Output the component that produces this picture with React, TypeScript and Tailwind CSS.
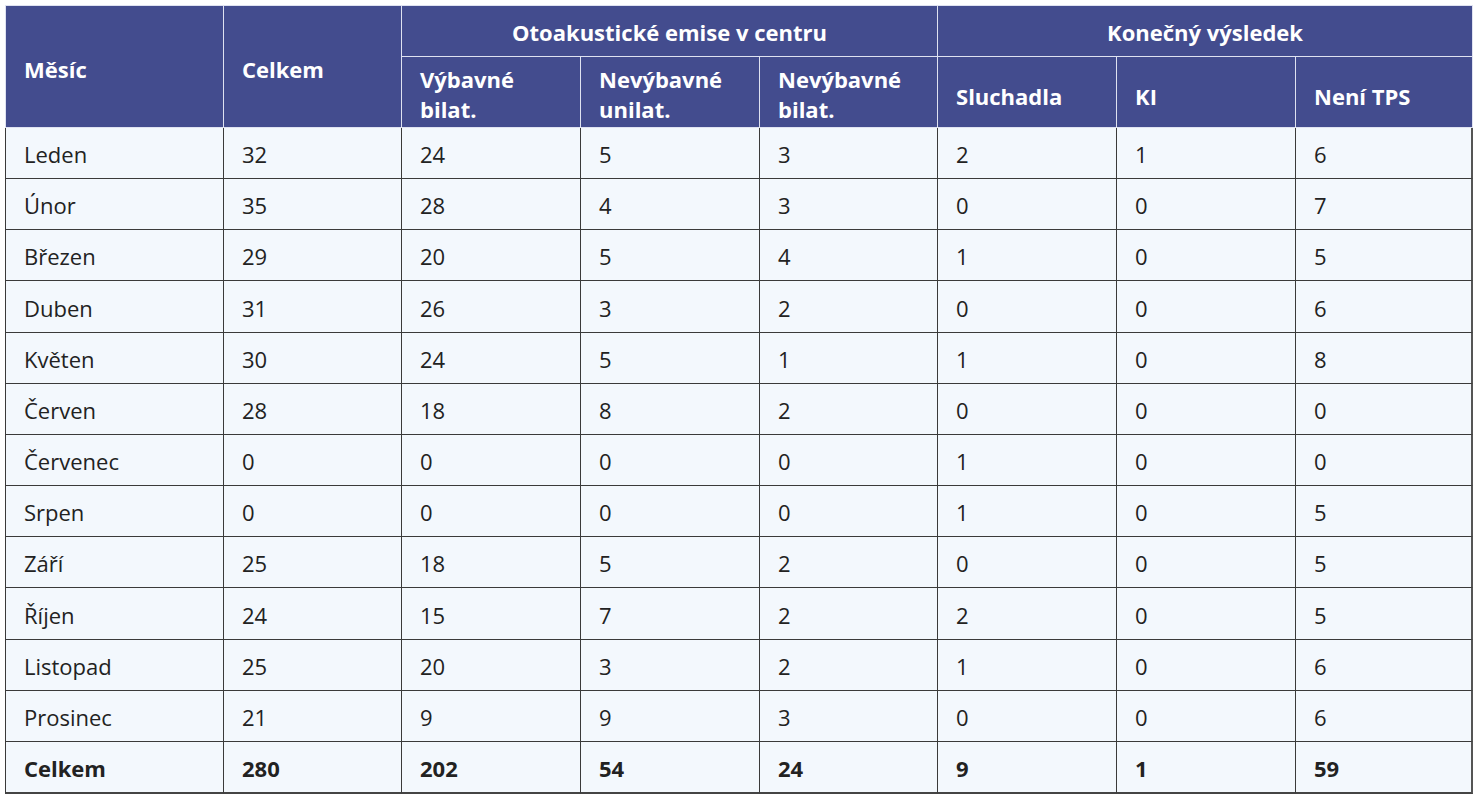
const rows: [string, number, number, number, number, number, number, number][] = [
  ['Leden', 32, 24, 5, 3, 2, 1, 6],
  ['Únor', 35, 28, 4, 3, 0, 0, 7],
  ['Březen', 29, 20, 5, 4, 1, 0, 5],
  ['Duben', 31, 26, 3, 2, 0, 0, 6],
  ['Květen', 30, 24, 5, 1, 1, 0, 8],
  ['Červen', 28, 18, 8, 2, 0, 0, 0],
  ['Červenec', 0, 0, 0, 0, 1, 0, 0],
  ['Srpen', 0, 0, 0, 0, 1, 0, 5],
  ['Září', 25, 18, 5, 2, 0, 0, 5],
  ['Říjen', 24, 15, 7, 2, 2, 0, 5],
  ['Listopad', 25, 20, 3, 2, 1, 0, 6],
  ['Prosinec', 21, 9, 9, 3, 0, 0, 6],
]

const total = ['Celkem', 280, 202, 54, 24, 9, 1, 59]

const widths = [219, 178, 179, 179, 178, 179, 179, 177]

const th = 'border-r border-b border-[#dfe2f1] px-[18px] text-left font-bold align-middle'
const td = 'border-r border-b border-[#3a3a3a] px-[18px] pt-[3px] align-middle'

export default function App() {
  return (
    <div className="bg-white w-[1482px] h-[800px] pt-[5px] pl-[5px]" style={{ fontFamily: '"Open Sans", sans-serif' }}>
      <table className="border-separate border-spacing-0 table-fixed w-[1468px] text-[22px] text-[#222]">
        <colgroup>
          {widths.map((w, i) => (
            <col key={i} style={{ width: w }} />
          ))}
        </colgroup>
        <thead className="bg-[#434c8e] text-white">
          <tr className="h-[52px]">
            <th rowSpan={2} className={th + ' border-l border-t pt-[6px]'}>Měsíc</th>
            <th rowSpan={2} className={th + ' border-t pt-[6px]'}>Celkem</th>
            <th colSpan={3} className="border-r border-b border-t border-[#dfe2f1] text-center font-bold pt-[2px]">Otoakustické emise v centru</th>
            <th colSpan={3} className="border-r border-b border-t border-[#dfe2f1] text-center font-bold pt-[2px]">Konečný výsledek</th>
          </tr>
          <tr className="h-[71px]">
            <th className={th + ' leading-[30px] pt-[4px]'}>Výbavné<br />bilat.</th>
            <th className={th + ' leading-[30px] pt-[4px]'}>Nevýbavné<br />unilat.</th>
            <th className={th + ' leading-[30px] pt-[4px]'}>Nevýbavné<br />bilat.</th>
            <th className={th + ' pt-[8px]'}>Sluchadla</th>
            <th className={th + ' pt-[8px]'}>KI</th>
            <th className={th + ' pt-[8px]'}>Není TPS</th>
          </tr>
        </thead>
        <tbody className="bg-[#f3f8fd]">
          {rows.map((r, ri) => (
            <tr key={r[0]} className={ri === 3 || ri === 9 ? 'h-[52px]' : 'h-[51px]'}>
              {r.map((c, i) => (
                <td key={i} className={td + (i === 0 ? ' border-l' : '') + (i === 7 ? ' border-r-2 border-r-[#555]' : '')}>{c}</td>
              ))}
            </tr>
          ))}
          <tr className="h-[52px]">
            {total.map((c, i) => (
              <td key={i} className={td + ' font-bold border-b-2 border-b-[#444]' + (i === 0 ? ' border-l' : '') + (i === 7 ? ' border-r-2 border-r-[#555]' : '')}>{c}</td>
            ))}
          </tr>
        </tbody>
      </table>
    </div>
  )
}
